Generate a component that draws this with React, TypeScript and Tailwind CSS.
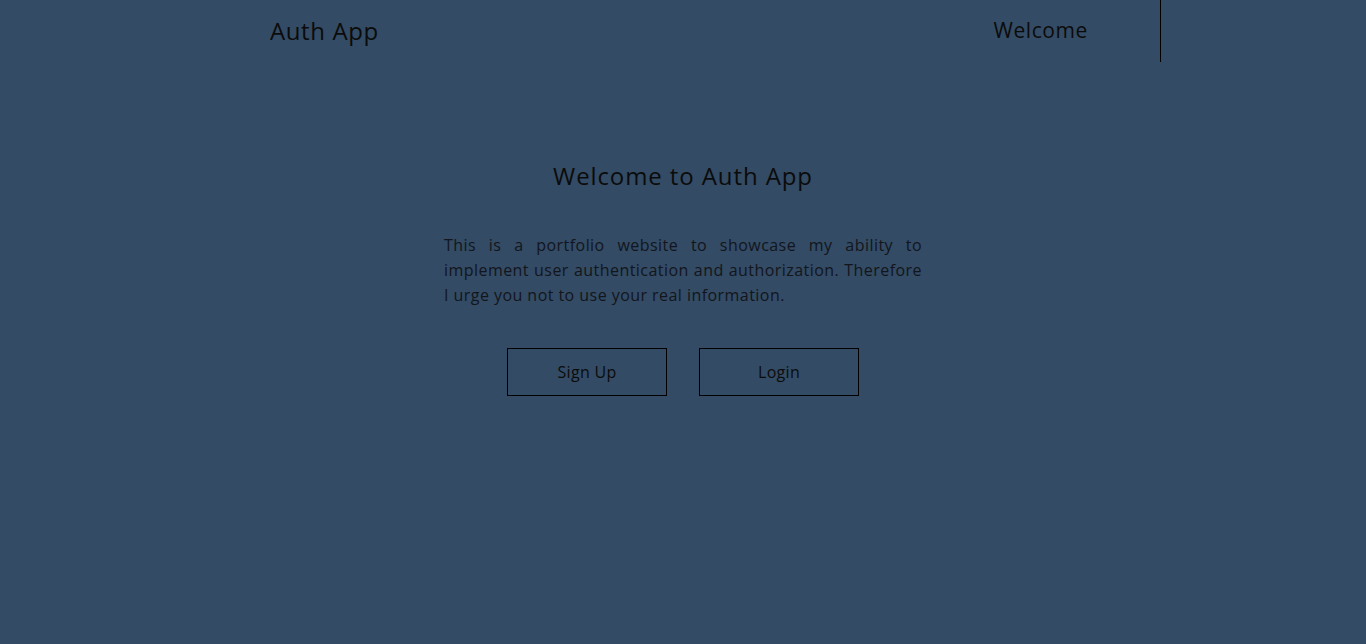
export default function App() {
  return (
    <div
      className="min-h-[644px] w-full bg-[#334b64] text-[#0b0b0b]"
      style={{ fontFamily: '"Open Sans", "DejaVu Sans", sans-serif' }}
    >
      {/* header */}
      <header className="flex h-[62px] items-center">
        <div className="pl-[270px] text-[24px] tracking-[0.6px]">Auth App</div>
        <div className="ml-auto flex h-full items-center">
          <span className="text-[21px] tracking-[0.6px]">Welcome</span>
          <div className="ml-[72px] h-full w-px bg-black"></div>
          <div className="w-[205px]"></div>
        </div>
      </header>

      <main className="flex flex-col items-center pt-[96px]">
        <h1 className="text-[24px] leading-[36px] tracking-[0.9px]">Welcome to Auth App</h1>

        <p className="mt-[39px] w-[478px] text-justify text-[16px] leading-[25px] tracking-[0.45px] text-[#12151c]">
          This is a portfolio website to showcase my ability to implement user
          authentication and authorization. Therefore I urge you not to use your
          real information.
        </p>

        <div className="mt-[40px] flex gap-[32px]">
          <button className="h-[48px] w-[160px] border border-black text-[16px] tracking-[0.3px]">
            Sign Up
          </button>
          <button className="h-[48px] w-[160px] border border-black text-[16px] tracking-[0.3px]">
            Login
          </button>
        </div>
      </main>
    </div>
  );
}
